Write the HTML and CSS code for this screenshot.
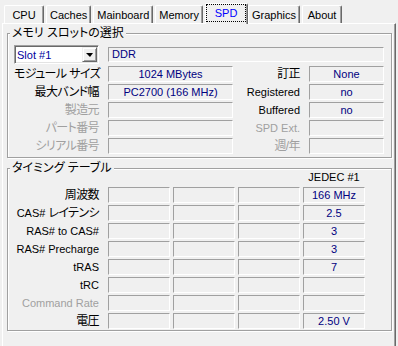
FILE: index.html
```html
<!DOCTYPE html>
<html lang="ja">
<head>
    <meta charset="UTF-8">
    <meta name="viewport" content="width=device-width, initial-scale=1.0">
    <title>CPU-Z SPD</title>
    <link rel="stylesheet" href="styles.css">
</head>
<body>
    <div class="tabs">
        <div class="tab">CPU</div>
        <div class="tab">Caches</div>
        <div class="tab">Mainboard</div>
        <div class="tab">Memory</div>
        <div class="tab active"><span>SPD</span></div>
        <div class="tab">Graphics</div>
        <div class="tab">About</div>
    </div>

    <div class="panel">
        <fieldset class="group slot">
            <legend>メモリ スロットの選択</legend>
            <div class="slot-grid">
                <div class="combo">
                    <span>Slot #1</span>
                    <i class="combo-btn"></i>
                </div>
                <div class="field left wide">DDR</div>

                <div class="label jp">モジュール サイズ</div>
                <div class="field">1024 MBytes</div>
                <div class="label jp">訂正</div>
                <div class="field">None</div>

                <div class="label jp">最大バンド幅</div>
                <div class="field">PC2700 (166 MHz)</div>
                <div class="label">Registered</div>
                <div class="field">no</div>

                <div class="label jp off">製造元</div>
                <div class="field"></div>
                <div class="label">Buffered</div>
                <div class="field">no</div>

                <div class="label jp off">パート番号</div>
                <div class="field"></div>
                <div class="label off">SPD Ext.</div>
                <div class="field"></div>

                <div class="label jp off">シリアル番号</div>
                <div class="field"></div>
                <div class="label jp off">週/年</div>
                <div class="field"></div>
            </div>
        </fieldset>

        <fieldset class="group timing">
            <legend>タイミング テーブル</legend>
            <div class="timing-grid">
                <div class="col-head">JEDEC #1</div>

                <div class="label jp">周波数</div>
                <div class="field"></div><div class="field"></div><div class="field"></div>
                <div class="field">166 MHz</div>

                <div class="label">CAS# <span class="jp">レイテンシ</span></div>
                <div class="field"></div><div class="field"></div><div class="field"></div>
                <div class="field">2.5</div>

                <div class="label">RAS# to CAS#</div>
                <div class="field"></div><div class="field"></div><div class="field"></div>
                <div class="field">3</div>

                <div class="label">RAS# Precharge</div>
                <div class="field"></div><div class="field"></div><div class="field"></div>
                <div class="field">3</div>

                <div class="label">tRAS</div>
                <div class="field"></div><div class="field"></div><div class="field"></div>
                <div class="field">7</div>

                <div class="label">tRC</div>
                <div class="field"></div><div class="field"></div><div class="field"></div>
                <div class="field"></div>

                <div class="label off">Command Rate</div>
                <div class="field"></div><div class="field"></div><div class="field"></div>
                <div class="field"></div>

                <div class="label jp">電圧</div>
                <div class="field"></div><div class="field"></div><div class="field"></div>
                <div class="field">2.50 V</div>
            </div>
        </fieldset>
    </div>
</body>
</html>
```

FILE: styles.css
```css
body {
    margin: 0;
    width: 398px;
    height: 346px;
    overflow: hidden;
    background-color: #f0f0f0;
    font-family: "Liberation Sans", "Noto Sans CJK JP", sans-serif;
    font-size: 11px;
    color: #000;
}
.jp {
    font-size: 12px;
    font-feature-settings: "palt";
}
.label.jp, .label .jp {
    letter-spacing: -0.6px;
}

/* tab strip */
.tabs {
    display: flex;
    align-items: flex-end;
    height: 23px;
    padding-left: 4px;
}
.tab {
    box-sizing: border-box;
    min-width: 40px;
    height: 18px;
    padding: 1px 3px 0;
    margin-right: 2px;
    line-height: 16px;
    text-align: center;
    border: 1px solid #fff;
    border-right-color: #696969;
    border-bottom: none;
    border-radius: 2px 2px 0 0;
    box-shadow: inset -1px 0 #a0a0a0;
}
.tab.active {
    position: relative;
    z-index: 1;
    min-width: 43px;
    height: 21px;
    margin: 0 0 -1px 0;
    padding: 0 1px 0 0;
    background-color: #f0f0f0;
    color: #0000ff;
}
.tab.active span {
    display: block;
    box-sizing: border-box;
    height: 18px;
    line-height: 16px;
    border: 1px dotted #000;
}

/* page body */
.panel {
    box-sizing: border-box;
    width: 394px;
    height: 330px;
    margin-left: 2px;
    padding: 2px 3px 0 4px;
    border-top: 1px solid #fff;
    border-left: 1px solid #fff;
    border-right: 1px solid #696969;
    box-shadow: inset -1px 0 #a0a0a0;
}
.group {
    min-width: 0;
    margin: 0;
    padding: 5px 0 3px 0;
    border: 1px solid #a0a0a0;
    box-shadow: inset 1px 1px #fff, 1px 1px #fff;
}
.group legend {
    margin-left: 2px;
    padding: 0 2px;
    font-size: 12px;
    line-height: 14px;
    font-feature-settings: "palt";
    background-color: #f0f0f0;
}
.group.timing {
    margin-top: 3px;
    padding: 0 0 1px 0;
}

.label {
    line-height: 16px;
    text-align: right;
    white-space: nowrap;
}
.label.off {
    color: #a0a0a0;
}
.field {
    box-sizing: border-box;
    border: 1px solid;
    border-color: #a0a0a0 #fff #fff #a0a0a0;
    line-height: 14px;
    text-align: center;
    white-space: nowrap;
    color: #000080;
}
.field.left {
    text-align: left;
    padding-left: 3px;
}

/* slot selection */
.slot-grid {
    display: grid;
    grid-template-columns: 85px 125px 58px 75px;
    grid-template-rows: 19px;
    grid-auto-rows: 16px;
    column-gap: 9px;
    row-gap: 2px;
    margin-left: 6px;
}
.field.wide {
    grid-column: 2 / 5;
    align-self: center;
    height: 15px;
    line-height: 13px;
}
.combo {
    box-sizing: border-box;
    display: flex;
    align-items: center;
    padding-left: 2px;
    background-color: #fff;
    border: 1px solid;
    border-color: #a0a0a0 #fff #fff #a0a0a0;
    box-shadow: inset 1px 1px #696969, inset -1px -1px #e3e3e3;
    color: #0000a0;
}
.combo-btn {
    box-sizing: border-box;
    display: flex;
    align-items: center;
    justify-content: center;
    width: 15px;
    height: 15px;
    margin-left: auto;
    margin-right: 1px;
    background-color: #f0f0f0;
    border: 1px solid;
    border-color: #f0f0f0 #696969 #696969 #f0f0f0;
    box-shadow: inset 1px 1px #fff, inset -1px -1px #a0a0a0;
}
.combo-btn::after {
    content: "";
    border-left: 4px solid transparent;
    border-right: 3px solid transparent;
    border-top: 4px solid #000;
}

/* timings */
.timing-grid {
    display: grid;
    grid-template-columns: 91px repeat(4, 62px);
    grid-template-rows: 14px;
    grid-auto-rows: 16px;
    column-gap: 3px;
    row-gap: 2px;
    margin: -4px 0 0 6px;
}
.timing-grid .label {
    padding-right: 6px;
}
.col-head {
    grid-column: 5;
    line-height: 12px;
    text-align: center;
}
```
